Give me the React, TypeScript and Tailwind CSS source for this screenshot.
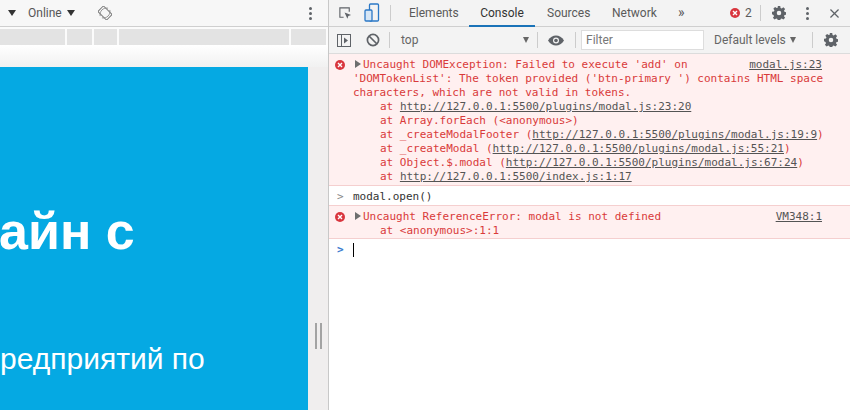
import React from "react";

const UI = "font-['Roboto','Noto_Sans',sans-serif]";

function Gear({ className = "" }: { className?: string }) {
  return (
    <svg width="14" height="14" viewBox="0 0 16 16" className={className}>
      <path
        fill="#5f6368"
        fillRule="evenodd"
        d="M6.6 0h2.800l.4 2.200 1.300.6 1.900-1.300 2 2-1.300 1.900.6 1.300 2.200.4v2.800l-2.200.4-.6 1.300 1.300 1.900-2 2-1.900-1.300-1.300.6-.4 2.200H6.600l-.4-2.200-1.300-.6-1.900 1.300-2-2 1.300-1.900-.6-1.300L0 9.400V6.600l2.200-.4.600-1.300L1.500 3l2-2 1.900 1.300 1.300-.6zM8 5.400a2.600 2.600 0 1 0 0 5.200 2.600 2.600 0 0 0 0-5.200z"
      />
    </svg>
  );
}

function Kebab() {
  return (
    <div className="flex flex-col gap-[2px]">
      <div className="w-[3px] h-[3px] rounded-full bg-[#5f6368]" />
      <div className="w-[3px] h-[3px] rounded-full bg-[#5f6368]" />
      <div className="w-[3px] h-[3px] rounded-full bg-[#5f6368]" />
    </div>
  );
}

function ErrIcon({ size = 10 }: { size?: number }) {
  return (
    <svg width={size} height={size} viewBox="0 0 10 10" className="shrink-0">
      <circle cx="5" cy="5" r="5" fill="#d9363e" />
      <path d="M3 3l4 4M7 3l-4 4" stroke="#fff" strokeWidth="1.400" />
    </svg>
  );
}

function Tri() {
  return <span className="inline-block w-0 h-0 border-y-[4px] border-y-transparent border-l-[6px] border-l-[#6e6e6e] mr-[2px] align-[0px]" />;
}

function Link({ children }: { children: React.ReactNode }) {
  return <span className="underline text-[#545454]">{children}</span>;
}

function Line({ children }: { children: React.ReactNode }) {
  return <div className="h-[14px] whitespace-pre">{children}</div>;
}

function Stack({ children }: { children: React.ReactNode }) {
  return <div className="pl-[27px] h-[14px] whitespace-pre">{children}</div>;
}

function App() {
  return (
    <div className="w-[850px] h-[410px] flex overflow-hidden bg-white">
      <div className="w-[328px] h-full flex flex-col bg-[#f3f3f3] shrink-0">
        <div className={`h-[27px] flex items-center bg-[#f7f7f7] border-b border-[#cfcfcf] text-[12px] text-[#555] ${UI}`}>
          <span className="w-0 h-0 ml-[8px] border-x-[4px] border-x-transparent border-t-[6px] border-t-[#333]" />
          <span className="ml-[12px]">Online</span>
          <span className="w-0 h-0 ml-[5px] border-x-[4px] border-x-transparent border-t-[6px] border-t-[#333]" />
          <svg width="14" height="14" viewBox="0 0 16 16" className="ml-[23px]">
            <g transform="rotate(-45 8 8)" fill="none" stroke="#777" strokeWidth="1.100">
              <rect x="3.500" y="1" width="9" height="14" rx="1" />
            </g>
            <path d="M2.500 11.500a7.500 7.500 0 0 1 9-9M13.500 4.500a7.500 7.500 0 0 1-9 9" fill="none" stroke="#888" />
          </svg>
          <div className="ml-auto mr-[16px]"><Kebab /></div>
        </div>
        <div className="h-[18px] pt-[2px] flex gap-[2px] bg-[#fbfbfb] pr-[2px]">
          <div className="w-[65px] h-[16px] bg-[#e3e3e3]" />
          <div className="w-[25px] h-[16px] bg-[#e3e3e3]" />
          <div className="w-[23px] h-[16px] bg-[#e3e3e3]" />
          <div className="w-[170px] h-[16px] bg-[#e3e3e3]" />
          <div className="w-[35px] h-[16px] bg-[#e3e3e3]" />
        </div>
        <div className="h-[22px] bg-gradient-to-b from-white to-[#f1f1f1]" />
        <div className="flex-1 flex min-h-0">
          <div className="w-[308px] bg-[#05a9e3] text-white font-['Liberation_Sans',Arial,sans-serif] overflow-hidden flex flex-col shrink-0">
            <div className="mt-[136px] h-[56px] leading-[56px] text-[52px] font-bold whitespace-nowrap -ml-[1px]">айн с</div>
            <div className="mt-[85px] text-[30px] leading-[30px] whitespace-nowrap">редприятий по</div>
          </div>
          <div className="w-[20px] bg-[#f0eeee] flex items-start justify-center gap-[3px] pt-[256px]">
            <div className="w-[2px] h-[26px] bg-[#a3a3a3]" />
            <div className="w-[2px] h-[26px] bg-[#a3a3a3]" />
          </div>
        </div>
      </div>
      <div className="flex-1 min-w-0 flex flex-col border-l border-[#c8c8c8]">
        <div className={`h-[27px] flex items-center bg-[#f3f3f3] border-b border-[#cfcfcf] text-[12px] text-[#5a5a5a] ${UI}`}>
          <svg width="15" height="15" viewBox="0 0 16 16" className="ml-[9px]">
            <path d="M6 12H2V2h10v4" fill="none" stroke="#5f6368" strokeWidth="1.200" />
            <path d="M7 7l7 2.600-3 1 -1 3z" fill="#5f6368" />
          </svg>
          <svg width="16" height="20" viewBox="0 0 16 20" className="ml-[11px]">
            <rect x="5.500" y="1" width="9" height="17" rx="1" fill="none" stroke="#2b78c6" strokeWidth="1.300" />
            <rect x="1" y="7" width="7" height="11" rx="1" fill="#d6e6f5" stroke="#2b78c6" strokeWidth="1.300" />
          </svg>
          <div className="w-px h-[16px] bg-[#ccc] ml-[10px]" />
          <span className="ml-[18px] w-[48px] whitespace-nowrap">Elements</span>
          <div className="ml-[12px] w-[66px] h-full relative flex items-center justify-center text-[#333]">
            Console
            <div className="absolute left-0 right-0 bottom-[-1px] h-[2px] bg-[#1a73b8]" />
          </div>
          <span className="ml-[12px] w-[40px] whitespace-nowrap">Sources</span>
          <span className="ml-[25px] w-[45px] whitespace-nowrap">Network</span>
          <span className="ml-[21px] w-[10px] text-[14px] leading-none mb-[3px]">»</span>
          <div className="ml-[42px]"><ErrIcon /></div>
          <span className="ml-[5px] w-[7px]">2</span>
          <div className="w-px h-[16px] bg-[#ccc] ml-[8px]" />
          <Gear className="ml-[11px]" />
          <div className="ml-[20px]"><Kebab /></div>
          <svg width="9" height="9" viewBox="0 0 10 10" className="ml-[21px]">
            <path d="M0.500 0.500l9 9M9.500 0.500l-9 9" stroke="#5f6368" strokeWidth="1.400" />
          </svg>
        </div>
        <div className={`h-[27px] flex items-center bg-[#f3f3f3] border-b border-[#dcdcdc] text-[12px] text-[#666] ${UI}`}>
          <svg width="14" height="13" viewBox="0 0 14 13" className="ml-[8px]">
            <rect x=".5" y=".5" width="13" height="12" fill="none" stroke="#5f6368" />
            <path d="M4.500.5v12" stroke="#5f6368" />
            <path d="M7 3.500l4 3-4 3z" fill="#5f6368" />
          </svg>
          <svg width="14" height="14" viewBox="0 0 14 14" className="ml-[15px]">
            <circle cx="7" cy="7" r="5.600" fill="none" stroke="#5f6368" strokeWidth="1.700" />
            <path d="M3 3l8 8" stroke="#5f6368" strokeWidth="1.700" />
          </svg>
          <div className="w-px h-[16px] bg-[#ccc] ml-[9px]" />
          <span className="ml-[11px] w-[122px]">top</span>
          <span className="w-0 h-0 border-x-[3.5px] border-x-transparent border-t-[6px] border-t-[#666]" />
          <div className="w-px h-[16px] bg-[#ccc] ml-[8px]" />
          <svg width="16" height="11" viewBox="0 0 16 11" className="ml-[10px]">
            <path d="M0 5.500C2 2 5 .5 8 .5s6 1.500 8 5c-2 3.500-5 5-8 5s-6-1.500-8-5z" fill="#5f6368" />
            <circle cx="8" cy="5.500" r="3" fill="#f3f3f3" />
            <circle cx="8" cy="5.500" r="1.800" fill="#5f6368" />
          </svg>
          <div className="w-px h-[16px] bg-[#ccc] ml-[11px]" />
          <div className="ml-[5px] w-[123px] h-[20px] bg-white border border-[#ddd] flex items-center pl-[4px] text-[#777] text-[12px]">Filter</div>
          <span className="ml-[10px] w-[71px] whitespace-nowrap">Default levels</span>
          <span className="ml-[5px] w-0 h-0 border-x-[3.5px] border-x-transparent border-t-[6px] border-t-[#666]" />
          <div className="w-px h-[16px] bg-[#ccc] ml-[16px]" />
          <Gear className="ml-[11px]" />
        </div>
        <div className="flex-1 font-['DejaVu_Sans_Mono',monospace] text-[11px] leading-[14px]">
          <div className="relative bg-[#fff0f0] border-b border-[#f5cfcf] text-[#d93a3a] pt-[4px] pl-[24px] h-[132px]">
            <div className="absolute left-[6px] top-[6px]"><ErrIcon /></div>
            <div className="h-[14px] whitespace-pre flex">
              <span className="ml-[2px]"><Tri /></span>
              <span>Uncaught DOMException: Failed to execute 'add' on</span>
              <span className="ml-auto mr-[28px]"><Link>modal.js:23</Link></span>
            </div>
            <Line>'DOMTokenList': The token provided ('btn-primary ') contains HTML space</Line>
            <Line>characters, which are not valid in tokens.</Line>
            <Stack>at <Link>http://127.0.0.1:5500/plugins/modal.js:23:20</Link></Stack>
            <Stack>at Array.forEach (&lt;anonymous&gt;)</Stack>
            <Stack>at _createModalFooter (<Link>http://127.0.0.1:5500/plugins/modal.js:19:9</Link>)</Stack>
            <Stack>at _createModal (<Link>http://127.0.0.1:5500/plugins/modal.js:55:21</Link>)</Stack>
            <Stack>at Object.$.modal (<Link>http://127.0.0.1:5500/plugins/modal.js:67:24</Link>)</Stack>
            <Stack>at <Link>http://127.0.0.1:5500/index.js:1:17</Link></Stack>
          </div>
          <div className="h-[20px] flex items-center border-b border-[#f5cfcf] text-[#333] pl-[8px] pt-[2px]">
            <span className="w-[16px] text-[#888]">&gt;</span>
            <span>modal.open()</span>
          </div>
          <div className="relative bg-[#fff0f0] border-b border-[#f5cfcf] text-[#d93a3a] pt-[4px] pl-[24px] h-[33px]">
            <div className="absolute left-[6px] top-[6px]"><ErrIcon /></div>
            <div className="h-[14px] whitespace-pre flex">
              <span className="ml-[2px]"><Tri /></span>
              <span>Uncaught ReferenceError: modal is not defined</span>
              <span className="ml-auto mr-[28px]"><Link>VM348:1</Link></span>
            </div>
            <Stack>at &lt;anonymous&gt;:1:1</Stack>
          </div>
          <div className="flex items-center h-[20px] pl-[8px] mt-[1px]">
            <span className="w-[16px] text-[#3a7ccf] font-bold">&gt;</span>
            <div className="w-px h-[14px] bg-black" />
          </div>
        </div>
      </div>
    </div>
  );
}

export default App;
